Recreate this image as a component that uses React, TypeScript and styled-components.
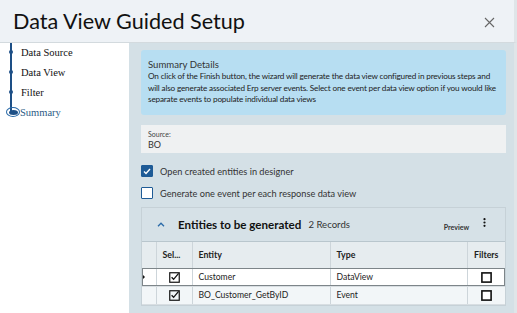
import styled, { createGlobalStyle } from 'styled-components';

const GlobalStyle = createGlobalStyle`
  * {
    box-sizing: border-box;
  }
  body {
    margin: 0;
    font-family: Lato, 'Open Sans', sans-serif;
    color: #222;
  }
`;

const Frame = styled.div`
  width: 517px;
  height: 313px;
  display: flex;
  flex-direction: column;
  overflow: hidden;
  background: #fff;
`;

const Header = styled.header`
  height: 43px;
  flex-shrink: 0;
  display: flex;
  align-items: center;
  justify-content: space-between;
  padding: 0 18px 0 13px;
  background: #eef2f6;
  border-bottom: 1px solid #d3dade;
  border-right: 3px solid #dfe5e8;
`;

const Title = styled.h1`
  margin: 0;
  font-size: 21.6px;
  font-weight: 400;
  color: #111;
`;

const Close = styled.button`
  border: none;
  background: none;
  padding: 0;
  margin-top: 4px;
  width: 12px;
  height: 12px;
  display: flex;
  cursor: pointer;
`;

const Body = styled.div`
  flex: 1;
  display: flex;
  min-height: 0;
`;

const Sidebar = styled.nav`
  width: 129px;
  flex-shrink: 0;
  background: #fff;
  position: relative;
  padding: 2px 0 0 0;
`;

const Rail = styled.div`
  position: absolute;
  left: 10px;
  top: 0;
  width: 2px;
  height: 68px;
  background: #1d4f86;
`;

const StepList = styled.ul`
  list-style: none;
  margin: 0;
  padding: 0;
  display: flex;
  flex-direction: column;
  gap: 6px;
`;

const Step = styled.li<{ $current?: boolean }>`
  position: relative;
  height: 14px;
  display: flex;
  align-items: center;
  padding-left: ${(p) => (p.$current ? '20px' : '21px')};
  font-family: 'Liberation Serif', 'Times New Roman', serif;
  font-size: 10.5px;
  color: ${(p) => (p.$current ? '#2b5a85' : '#111')};
`;

const Dot = styled.span`
  position: absolute;
  left: 9px;
  top: 5px;
  width: 4px;
  height: 4px;
  border-radius: 50%;
  background: #1d4f86;
`;

const CurrentDot = styled.span`
  position: absolute;
  left: 6px;
  top: 2px;
  width: 14px;
  height: 10px;
  border-radius: 50%;
  border: 1px solid #2a6aa8;
  display: flex;
  align-items: center;
  justify-content: center;

  &::after {
    content: '';
    width: 9px;
    height: 5px;
    border-radius: 50%;
    background: #1d4f86;
  }
`;

const Content = styled.main`
  flex: 1;
  background: #d4e0e6;
  padding: 7px 8px 0 12px;
  border-right: 3px solid #dfe5e8;
  display: flex;
  flex-direction: column;
`;

const SummaryBox = styled.section`
  background: #b7def2;
  border-radius: 3px;
  padding: 8px 4px 9px 7px;
  font-size: 8.2px;
  letter-spacing: -0.17px;
  line-height: 11.7px;
  color: #222;
`;

const SummaryTitle = styled.div`
  font-size: 9.6px;
  letter-spacing: 0;
  line-height: 13px;
  color: #333;
`;

const SourceBox = styled.div`
  margin-top: 10px;
  height: 28px;
  background: #eff1f2;
  padding: 5px 7px 0 7px;
  display: flex;
  flex-direction: column;
`;

const SourceLabel = styled.span`
  font-size: 7px;
  line-height: 9px;
  color: #444;
`;

const SourceValue = styled.span`
  font-size: 9px;
  line-height: 12px;
  color: #333;
`;

const Option = styled.label<{ $gap?: number }>`
  display: flex;
  align-items: center;
  gap: 7px;
  height: 12px;
  font-size: 9.2px;
  color: #333;
  margin-top: ${(p) => p.$gap ?? 10}px;
`;

const Box = styled.span<{ $checked?: boolean }>`
  width: 12px;
  height: 12px;
  flex-shrink: 0;
  border-radius: 1px;
  border: 1.5px solid #1e5b96;
  background: ${(p) => (p.$checked ? '#1e5b96' : '#fff')};
  display: flex;
  align-items: center;
  justify-content: center;
`;

const GridPanel = styled.section`
  margin-top: 8px;
  border: 1px solid #c6d1d7;
  background: #d6e1e7;
`;

const GridBar = styled.div`
  height: 34px;
  display: flex;
  align-items: center;
  padding: 0 19px 0 15px;
  border-bottom: 1px solid #b9c6cd;
`;

const Chevron = styled.span`
  display: flex;
  margin-right: 13px;
`;

const GridTitle = styled.span`
  font-size: 11.6px;
  font-weight: 700;
  color: #111;
`;

const RecordCount = styled.span`
  font-size: 9.6px;
  color: #333;
  margin-left: 7px;
`;

const Preview = styled.span`
  margin-left: auto;
  margin-top: 5px;
  font-size: 7px;
  font-weight: 700;
  color: #333;
`;

const Kebab = styled.span`
  display: flex;
  margin-left: 14px;
  margin-bottom: 4px;
`;

const Table = styled.table`
  width: 100%;
  border-collapse: collapse;
  table-layout: fixed;
  font-size: 8.6px;
  color: #222;
`;

const Th = styled.th<{ $w?: number; $center?: boolean }>`
  width: ${(p) => (p.$w ? `${p.$w}px` : 'auto')};
  height: 26px;
  padding: 0 6px;
  text-align: ${(p) => (p.$center ? 'center' : 'left')};
  font-weight: 700;
  font-size: 8.8px;
  color: #222;
  background: #e6ecef;
  border-right: 1px solid #cdd5da;
  border-bottom: 1px solid #cdd5da;
  white-space: nowrap;
  overflow: hidden;

  &:last-child {
    border-right: none;
    padding: 0 2px;
  }
`;

const Row = styled.tr<{ $selected?: boolean; $alt?: boolean }>`
  height: 18px;
  background: ${(p) => (p.$alt ? '#f2f6f8' : '#fff')};
  outline: ${(p) => (p.$selected ? '1px solid #7d8589' : 'none')};
  outline-offset: -1px;
`;

const Td = styled.td<{ $center?: boolean }>`
  padding: 0 6px;
  text-align: ${(p) => (p.$center ? 'center' : 'left')};
  border-right: 1px solid #cdd5da;
  border-bottom: 1px solid #d8dee2;
  white-space: nowrap;
  vertical-align: middle;

  &:last-child {
    border-right: none;
  }
`;

const IndicatorCell = styled.td`
  padding: 0;
  border-right: 1px solid #cdd5da;
  border-bottom: 1px solid #d8dee2;
  vertical-align: middle;
`;

const Caret = styled.span`
  display: block;
  width: 0;
  height: 0;
  border-top: 3px solid transparent;
  border-bottom: 3px solid transparent;
  border-left: 3px solid #111;
`;

const CellIcon = styled.span`
  display: inline-flex;
  vertical-align: middle;
`;

function TickBox() {
  return (
    <CellIcon>
      <svg width="11" height="11" viewBox="0 0 11 11">
        <rect x="0.75" y="0.75" width="9.5" height="9.5" fill="none" stroke="#111" strokeWidth="1.2" />
        <path d="M2.6 5.3 L4.6 7.3 L9.6 1.4" fill="none" stroke="#111" strokeWidth="1.3" />
      </svg>
    </CellIcon>
  );
}

function EmptyBox() {
  return (
    <CellIcon>
      <svg width="11" height="11" viewBox="0 0 11 11">
        <rect x="0.9" y="0.9" width="9.2" height="9.2" fill="#fff" stroke="#111" strokeWidth="1.6" />
      </svg>
    </CellIcon>
  );
}

const steps = ['Data Source', 'Data View', 'Filter'];

const rows = [
  { entity: 'Customer', type: 'DataView', selected: true },
  { entity: 'BO_Customer_GetByID', type: 'Event', selected: false },
];

export default function App() {
  return (
    <>
      <GlobalStyle />
      <Frame>
        <Header>
          <Title>Data View Guided Setup</Title>
          <Close aria-label="Close">
            <svg width="11" height="11" viewBox="0 0 11 11">
              <path d="M1 1 L10 10 M10 1 L1 10" stroke="#666" strokeWidth="1.1" />
            </svg>
          </Close>
        </Header>
        <Body>
          <Sidebar>
            <Rail />
            <StepList>
              {steps.map((s) => (
                <Step key={s}>
                  <Dot />
                  {s}
                </Step>
              ))}
              <Step $current>
                <CurrentDot />
                Summary
              </Step>
            </StepList>
          </Sidebar>
          <Content>
            <SummaryBox>
              <SummaryTitle>Summary Details</SummaryTitle>
              On click of the Finish button, the wizard will generate the data view configured in previous steps and
              will also generate associated Erp server events. Select one event per data view option if you would like
              separate events to populate individual data views
            </SummaryBox>
            <SourceBox>
              <SourceLabel>Source:</SourceLabel>
              <SourceValue>BO</SourceValue>
            </SourceBox>
            <Option $gap={12}>
              <Box $checked>
                <svg width="8" height="7" viewBox="0 0 8 7">
                  <path d="M1 3.6 L3 5.5 L7 1" fill="none" stroke="#fff" strokeWidth="1.4" />
                </svg>
              </Box>
              Open created entities in designer
            </Option>
            <Option $gap={10}>
              <Box />
              Generate one event per each response data view
            </Option>
            <GridPanel>
              <GridBar>
                <Chevron>
                  <svg width="8" height="5" viewBox="0 0 8 5">
                    <path d="M1 4.2 L4 1.2 L7 4.2" fill="none" stroke="#2a6aa8" strokeWidth="1.3" />
                  </svg>
                </Chevron>
                <GridTitle>Entities to be generated</GridTitle>
                <RecordCount>2 Records</RecordCount>
                <Preview>Preview</Preview>
                <Kebab>
                  <svg width="3" height="9" viewBox="0 0 3 9">
                    <circle cx="1.5" cy="1.2" r="1.1" fill="#111" />
                    <circle cx="1.5" cy="4.5" r="1.1" fill="#111" />
                    <circle cx="1.5" cy="7.8" r="1.1" fill="#111" />
                  </svg>
                </Kebab>
              </GridBar>
              <Table>
                <thead>
                  <tr>
                    <Th $w={14} />
                    <Th $w={36}>Sel...</Th>
                    <Th $w={138}>Entity</Th>
                    <Th $w={137}>Type</Th>
                    <Th $center>Filters</Th>
                  </tr>
                </thead>
                <tbody>
                  {rows.map((r, i) => (
                    <Row key={r.entity} $selected={r.selected} $alt={i % 2 === 1}>
                      <IndicatorCell>{r.selected && <Caret />}</IndicatorCell>
                      <Td $center>
                        <TickBox />
                      </Td>
                      <Td>{r.entity}</Td>
                      <Td>{r.type}</Td>
                      <Td $center>
                        <EmptyBox />
                      </Td>
                    </Row>
                  ))}
                </tbody>
              </Table>
            </GridPanel>
          </Content>
        </Body>
      </Frame>
    </>
  );
}
